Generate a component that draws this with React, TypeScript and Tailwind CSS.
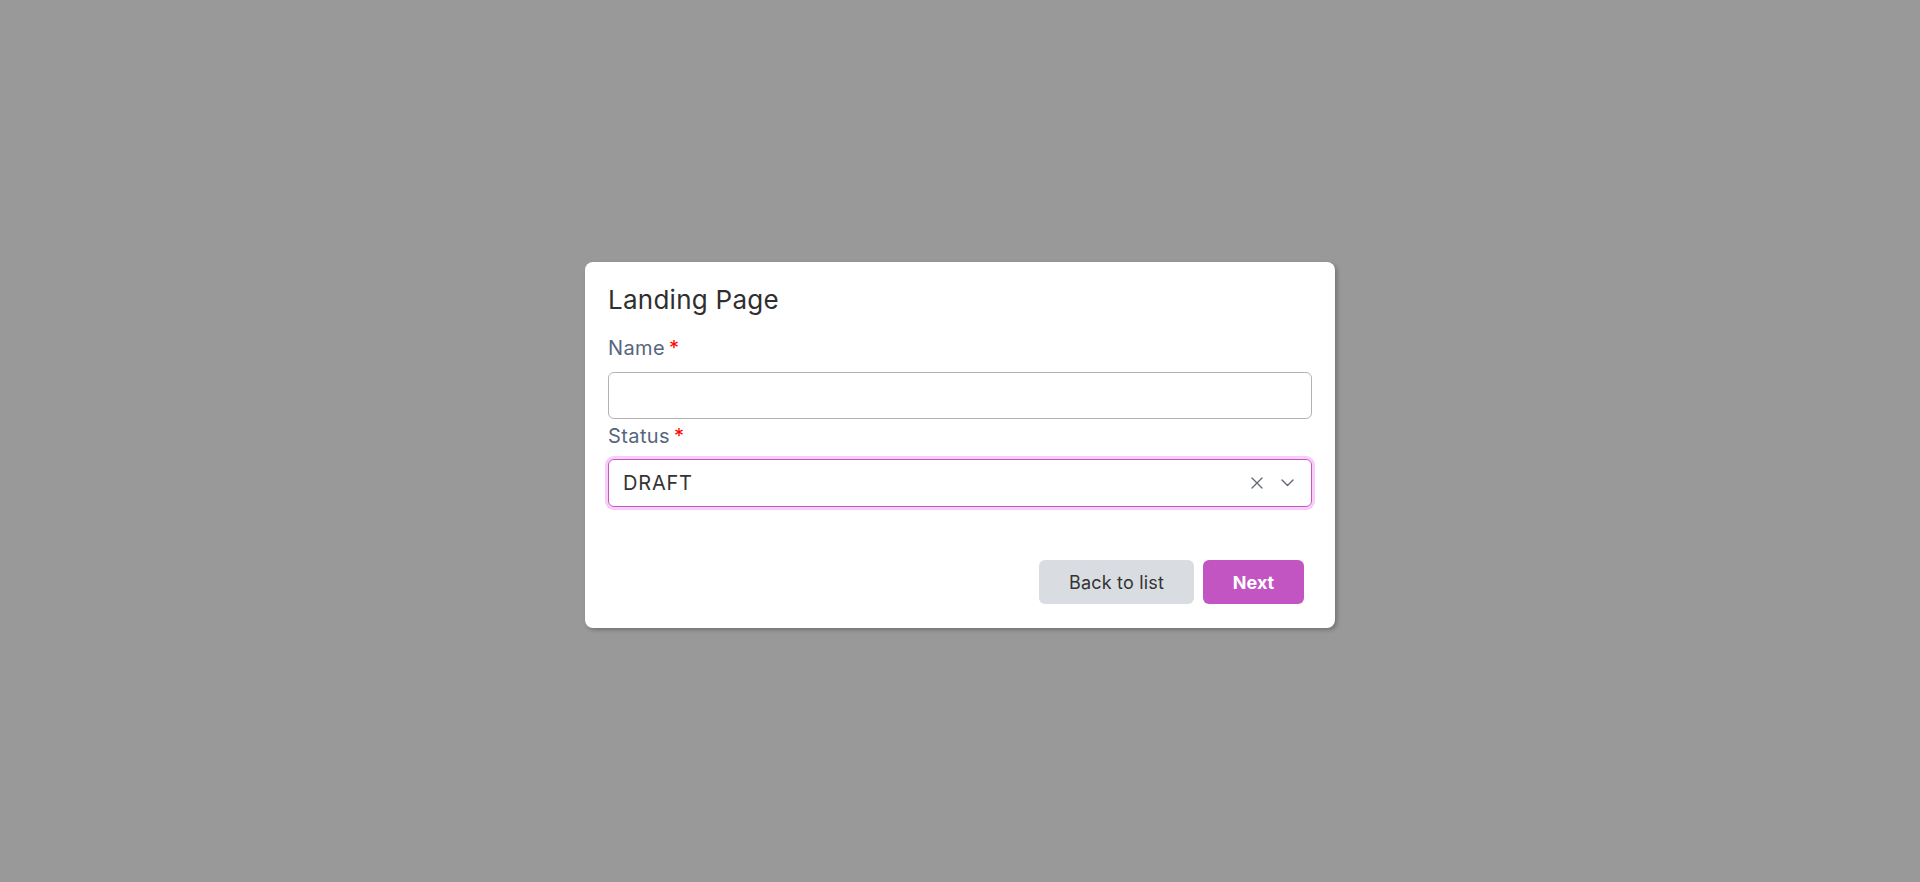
import React, { useState } from 'react'

const statusOptions = ['DRAFT', 'PUBLISHED', 'ARCHIVED']

function RequiredLabel({ children }: { children: React.ReactNode }) {
  return (
    <label className="flex items-center text-[20px] leading-7 tracking-[0.02em] text-[#56667f]">
      {children}
      <span className="ml-[4px] text-[#ff0000]">*</span>
    </label>
  )
}

export default function App() {
  const [name, setName] = useState('')
  const [status, setStatus] = useState<string | null>(statusOptions[0])

  return (
    <div
      className="flex min-h-screen items-center justify-center bg-[#999999] pt-[8px]"
      style={{ fontFamily: 'Inter, "Noto Sans", sans-serif' }}
    >
      <div className="w-[750px] rounded-lg bg-white px-[23px] pb-[24px] pt-[22px] shadow-[2px_2px_4px_rgba(0,0,0,0.25)]">
        {/* Header */}
        <h2 className="text-[26px] leading-8 tracking-[0.01em] text-[#2f2f2f]">Landing Page</h2>

        {/* Name */}
        <div className="mt-[18px]">
          <RequiredLabel>Name</RequiredLabel>
          <input
            value={name}
            onChange={(e) => setName(e.target.value)}
            className="mt-[10px] h-[47px] w-full rounded-md border border-[#b3b3b3] px-[14px] text-[19px] text-[#333] outline-none"
          />
        </div>

        {/* Status */}
        <div className="mt-[3px]">
          <RequiredLabel>Status</RequiredLabel>
          <div className="mt-[9px] flex h-[48px] w-full items-center rounded-md border border-[#c455c4] pl-[14px] pr-[12px] ring-[3px] ring-[#f9cdf9]">
            <span className="flex-1 text-[20px] tracking-[0.04em] text-[#333]">{status}</span>
            {status && (
              <button onClick={() => setStatus(null)} className="flex h-6 w-6 items-center justify-center text-[#5f6670]">
                <svg width="12" height="12" viewBox="0 0 12 12" fill="none" stroke="currentColor" strokeWidth="1.3" strokeLinecap="round">
                  <path d="M1 1 L11 11 M11 1 L1 11" />
                </svg>
              </button>
            )}
            <span className="ml-[6px] flex h-6 w-6 items-center justify-center text-[#5f6670]">
              <svg width="13" height="8" viewBox="0 0 13 8" fill="none" stroke="currentColor" strokeWidth="1.4" strokeLinecap="round" strokeLinejoin="round">
                <path d="M1 1 L6.5 6.5 L12 1" />
              </svg>
            </span>
          </div>
        </div>

        {/* Actions */}
        <div className="mr-[8px] mt-[53px] flex justify-end gap-[9px]">
          <button className="h-[44px] w-[155px] rounded-md bg-[#d9dde1] text-[18px] tracking-[0.01em] text-[#333]">
            Back to list
          </button>
          <button className="h-[44px] w-[101px] rounded-md bg-[#c255c2] text-[18px] font-bold text-white">
            Next
          </button>
        </div>
      </div>
    </div>
  )
}
